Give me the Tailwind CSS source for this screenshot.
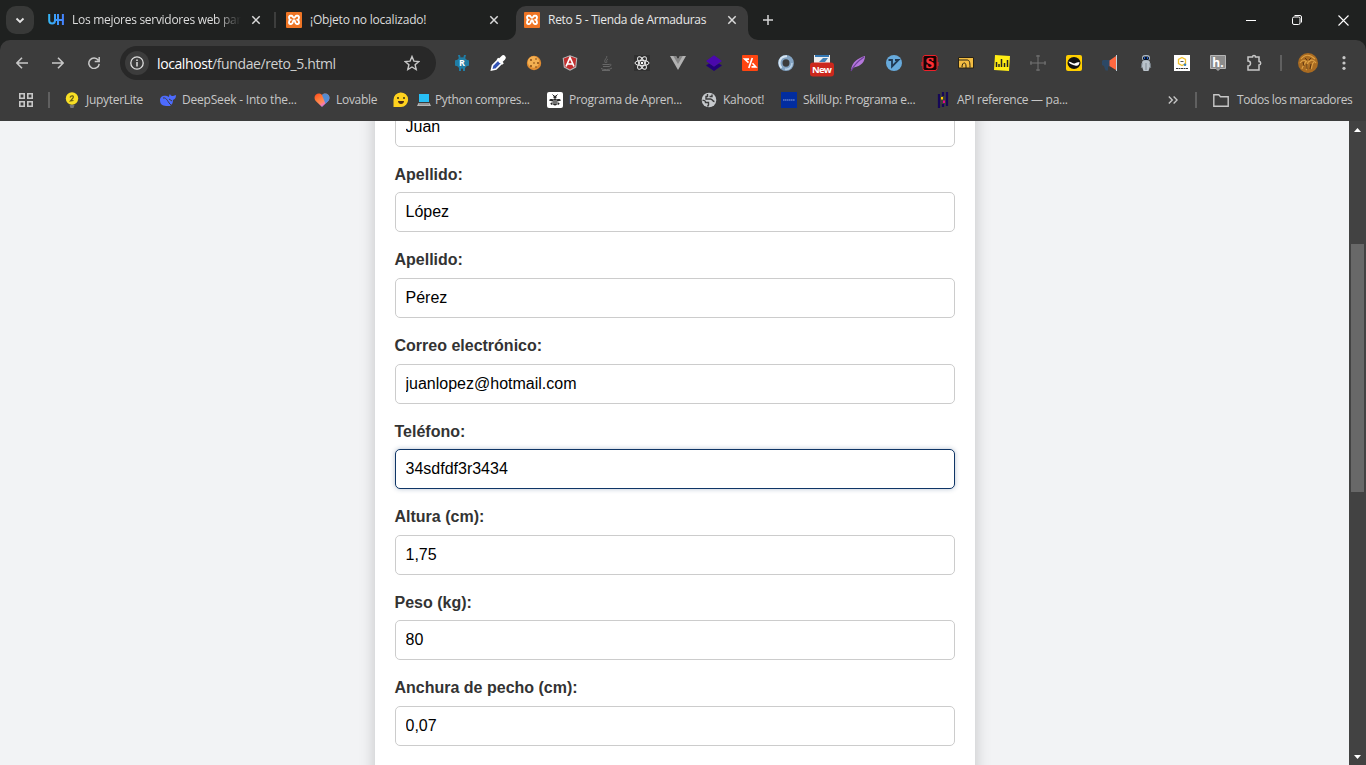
<!DOCTYPE html>
<html lang="es">
<head>
<meta charset="utf-8">
<title>Reto 5 - Tienda de Armaduras</title>
<script src="https://cdn.jsdelivr.net/npm/@tailwindcss/browser@4"></script>
</head>
<body class="w-[1366px] h-[765px] overflow-hidden flex flex-col bg-[#1f2120] font-['Open_Sans','Noto_Sans',sans-serif] text-[12px]">
<svg class="hidden">
  <symbol id="xampp" viewBox="0 0 16 16"><rect width="16" height="16" rx="1" fill="#ee7525"/><path d="M5.500 3.800H4.300C2.600 3.800 2.600 7 4.300 7.800 2.600 8.700 2.600 12 4.300 12H5.300C7.200 12 6.500 8.200 8 8.200S8.800 12 10.700 12h1c1.700 0 1.700-3.300 0-4.200 1.700-.8 1.700-4-.0-4h-1.200C9.300 3.800 9.300 5.800 8 5.800S6.700 3.800 5.500 3.800Z" fill="none" stroke="#fff" stroke-width="1.900"/></symbol>
  <symbol id="close" viewBox="0 0 10 10"><path d="M1.300 1.300 8.700 8.700M8.700 1.300 1.300 8.700" stroke="#dadada" stroke-width="1.500"/></symbol>
</svg>

<!-- Tab strip -->
<header class="h-10 shrink-0 flex items-center text-[#dcdcdc] relative">
  <button class="ml-[6px] size-7 rounded-[10px] bg-[#383938] flex items-center justify-center"><svg class="w-[10px] h-[7px]" viewBox="0 0 10 7"><path d="M1.500 1.500 5 5l3.500-3.500" fill="none" stroke="#e4e4e4" stroke-width="1.800"/></svg></button>
  <div class="ml-[14px] w-[226px] flex items-center">
    <svg class="size-4 shrink-0" viewBox="0 0 16 16"><defs><linearGradient id="uh"><stop stop-color="#36b5f5"/><stop offset="1" stop-color="#4484ff"/></linearGradient></defs><path d="M1.200 2v6.500a2.900 2.900 0 0 0 5.800 0V2M10 2v11M14.900 2v11M7 8h8" fill="none" stroke="url(#uh)" stroke-width="2"/></svg>
    <span class="ml-2 w-[169px] overflow-hidden whitespace-nowrap tracking-[-0.29px] [mask-image:linear-gradient(to_right,black_145px,transparent_169px)]">Los mejores servidores web para</span>
    <svg class="ml-[10px] size-[10px]"><use href="#close"/></svg>
  </div>
  <span class="w-[2px] h-4 bg-[#3d3e3d]"></span>
  <div class="ml-[10px] w-[230px] flex items-center">
    <svg class="size-4 shrink-0"><use href="#xampp"/></svg>
    <span class="ml-2 w-[179px] whitespace-nowrap tracking-[-0.2px]">¡Objeto no localizado!</span>
    <svg class="size-[10px]"><use href="#close"/></svg>
  </div>
  <div class="relative self-end h-[34px] w-[232px] bg-[#3c3c3c] rounded-t-[10px] flex items-center pb-[6px] pl-2 text-[#e8e8e8]">
    <svg class="absolute -left-[10px] bottom-0 size-[10px]" viewBox="0 0 10 10"><path d="M10 0v10H0A10 10 0 0 0 10 0" fill="#3c3c3c"/></svg>
    <svg class="absolute -right-[10px] bottom-0 size-[10px]" viewBox="0 0 10 10"><path d="M0 0v10h10A10 10 0 0 1 0 0" fill="#3c3c3c"/></svg>
    <svg class="size-4 shrink-0"><use href="#xampp"/></svg>
    <span class="ml-2 w-[179px] whitespace-nowrap tracking-[-0.28px]">Reto 5 - Tienda de Armaduras</span>
    <svg class="size-[10px]"><use href="#close"/></svg>
  </div>
  <svg class="ml-[15px] size-[10px]" viewBox="0 0 10 10"><path d="M5 0v10M0 5h10" stroke="#d5d5d5" stroke-width="1.500"/></svg>
  <div class="ml-auto mr-[17px] flex items-center gap-9 text-white">
    <svg class="size-[10px]" viewBox="0 0 10 10"><path d="M0 5.500h10" stroke="#fff"/></svg>
    <svg class="size-[10px]" viewBox="0 0 10 10"><rect x=".5" y="2" width="7.500" height="7.500" rx="1.500" fill="none" stroke="#fff"/><path d="M2.500 .5H8A1.500 1.500 0 0 1 9.500 2v5.500" fill="none" stroke="#fff"/></svg>
    <svg class="size-[11px]" viewBox="0 0 11 11"><path d="m.5.5 10 10m0-10-10 10" stroke="#fff" stroke-width="1.100"/></svg>
  </div>
</header>

<!-- Toolbar and bookmarks -->
<nav class="h-[81px] shrink-0 bg-[#3c3c3c] rounded-t-[10px]">
  <div class="h-[46px] flex items-center text-[#c7c7c7]">
    <svg class="ml-4 size-3" viewBox="0 0 12 12"><path d="M12 6H1M6 .8.900 6 6 11.200" fill="none" stroke="#c7c7c7" stroke-width="1.600"/></svg>
    <svg class="ml-6 size-3" viewBox="0 0 12 12"><path d="M0 6h11M6 .8 11.100 6 6 11.200" fill="none" stroke="#c7c7c7" stroke-width="1.600"/></svg>
    <svg class="ml-6 size-3" viewBox="0 0 12 12"><path d="M10.300 3.300A5.200 5.200 0 1 0 11.200 6.800M11.200 0v4.500H6.700" fill="none" stroke="#c7c7c7" stroke-width="1.500"/></svg>
    <div class="ml-5 w-[316px] h-[34px] rounded-full bg-[#282828] flex items-center pl-[5px] pr-4">
      <span class="size-6 rounded-full bg-[#3c3c3c] flex items-center justify-center"><svg class="size-[14px]" viewBox="0 0 14 14"><circle cx="7" cy="7" r="6.200" fill="none" stroke="#dedede" stroke-width="1.300"/><path d="M7 6v4.500M7 3.500V5" stroke="#dedede" stroke-width="1.500"/></svg></span>
      <span class="ml-2 text-[14px] tracking-[-0.4px] text-[#d0d0d0]"><span class="text-white">localhost</span>/fundae/reto_5.html</span>
      <svg class="ml-auto size-4" viewBox="0 0 16 16"><path d="m8 1.500 1.900 4.600 4.900.4-3.700 3.200 1.100 4.800L8 12l-4.200 2.500 1.100-4.800L1.200 6.500l4.900-.4Z" fill="none" stroke="#c7c7c7" stroke-width="1.400"/></svg>
    </div>
    <div class="ml-2 flex items-center [&>svg]:size-4 [&>svg]:mx-[10px] [&>svg]:shrink-0 [&>svg]:overflow-visible">
      <svg viewBox="0 0 16 16"><g fill="#207da5"><circle cx="8" cy="8" r="5.800"/><rect x="1" y="5" width="14" height="6" rx="1"/><path d="M4 0h2l1 4H5ZM12 0h-2L9 4h2ZM5 12h2v4H5ZM9 12h2v4H9Z"/></g><text x="8" y="11.300" text-anchor="middle" font-size="9" font-weight="700" fill="#fff">R</text></svg>
      <svg viewBox="0 0 16 16"><path d="m1.500 15 1-4.500 6-6L12 8l-6 6Z" fill="#3454b4" stroke="#fff" stroke-width="1.600"/><path d="m7.500 3.500 5.500 5.500" stroke="#fff" stroke-width="2.400"/><path d="m10.500 5.500 2.800-2.800" stroke="#fff" stroke-width="5" stroke-linecap="round"/></svg>
      <svg viewBox="0 0 16 16"><circle cx="8" cy="8" r="7.200" fill="#df8b31"/><circle cx="7.500" cy="7" r="5.700" fill="#f4b052"/><g fill="#79410f"><circle cx="5" cy="5" r=".9"/><circle cx="10" cy="4" r=".8"/><circle cx="8" cy="8" r=".8"/><circle cx="12" cy="8" r=".9"/><circle cx="5" cy="11" r=".9"/><circle cx="10" cy="12" r=".8"/></g></svg>
      <svg viewBox="0 0 16 16"><path d="m8 .3 7.300 2.600-1.100 9.500L8 15.700l-6.200-3.300L.7 2.900Z" fill="#b9babb"/><path d="m8 1.300 6.200 2.200-1 8.300L8 14.600l-5.200-2.800-1-8.300Z" fill="#c12d2d"/><path d="m4 11.500 4-9 4 9M5.500 9h5" fill="none" stroke="#fff" stroke-width="1.700"/></svg>
      <svg viewBox="0 0 16 16" fill="none" stroke="#686868" stroke-width="1"><path d="M8.500 1C10 3 5 4.500 7.500 8M10 4C7.500 5.500 9.500 6 8.500 8M4.500 9.500h6.500M5 11.500h6M11 9.500c3-1 2.500 1.500 0 2M3 13.500c2 1.500 9 1.500 11-.5M4 15.500h8"/></svg>
      <svg viewBox="0 0 16 16"><rect width="16" height="16" fill="#303030"/><g fill="none" stroke="#eee"><ellipse cx="8" cy="8" rx="7" ry="2.700"/><ellipse cx="8" cy="8" rx="7" ry="2.700" transform="rotate(60 8 8)"/><ellipse cx="8" cy="8" rx="7" ry="2.700" transform="rotate(120 8 8)"/></g><circle cx="8" cy="8" r="1.200" fill="#fff"/></svg>
      <svg viewBox="0 0 16 16"><path d="M0 1h6l2 3.500L10 1h6L8 15Z" fill="#b2b2b2"/><path d="M3.300 1H6l2 3.500L10 1h2.700L8 9Z" fill="#858585"/></svg>
      <svg viewBox="0 0 16 16"><path d="m0 10.500 3-2 5 3 5-3 3 2L8 16Z" fill="#230079"/><path d="m8 .3 8 5.700-8 5.800L0 6Z" fill="#4b08ad"/></svg>
      <svg viewBox="0 0 16 16"><rect width="16" height="16" rx="1" fill="#ff4510"/><path d="M7 4.200H2.800L6.500 7.700M10.300 3 6.800 13M9.500 11.800h4.200L10.500 8.300" fill="none" stroke="#fff" stroke-width="1.700"/></svg>
      <svg viewBox="0 0 16 16"><ellipse cx="8" cy="8" rx="5.700" ry="5.900" fill="none" stroke="#83a3c2" stroke-width="4.400"/><path d="M9 1.200C4 .8 1.500 4.300 1.500 8c0 2 .8 3.700 2 5" fill="none" stroke="#d5e5f2" stroke-width="2"/><path d="M7 14c4 1 7-2 7-6" fill="none" stroke="#b7cfe4" stroke-width="1.500"/></svg>
      <svg viewBox="0 0 16 16"><path d="M0 0h16v8H0Z" fill="#eee"/><path d="M1 0h14v2H1Z" fill="#3377b3"/><path d="M5 7 9 3h5L11 7Z" fill="#4380b4"/><rect x="-4" y="7.500" width="24" height="14" rx="3" fill="#cc281d"/><text x="8" y="18" text-anchor="middle" font-size="9.500" font-weight="700" fill="#fff" textLength="20">New</text></svg>
      <svg viewBox="0 0 16 16"><path d="M1 15C2 7 8 3 15 1c0 6-4 10-11 11.500Z" fill="#b477db"/><path d="M1 16C4 10 8 6 14 2" fill="none" stroke="#70409c" stroke-width="1.200"/></svg>
      <svg viewBox="0 0 16 16"><circle cx="8" cy="8" r="8" fill="#67aadc"/><path d="M2.500 5H6v6.500L12.500 5H9" fill="none" stroke="#203953" stroke-width="1.800"/></svg>
      <svg viewBox="0 0 16 16"><rect x="1" y=".5" width="14" height="15" rx="2" fill="#150405" stroke="#ed2029"/><text x="8" y="13" text-anchor="middle" font-size="15" font-weight="700" fill="#ff3038" stroke="#ff3038" stroke-width=".6" font-family="Liberation Serif">S</text><path d="M0 7v4M16 7v4" stroke="#ed2029"/></svg>
      <svg viewBox="0 0 16 16"><path d="M.5 2.500h15v10.500H.5Z" fill="#f3bd42" stroke="#292315"/><path d="M1 5h8c2.500 0 3 2 3 7.500M4 12c0-5 4-5.500 4-1v2" fill="none" stroke="#292315"/></svg>
      <svg viewBox="0 0 16 16"><path d="m1 0 15 1-1 15-15-1Z" fill="#ffed14"/><path d="M2.500 7v5M5 9v3M7.500 4v8M10.500 8v4M13.500 5v7" stroke="#242424" stroke-width="1.500"/></svg>
      <svg viewBox="0 0 16 16" fill="none" stroke="#747474"><path d="M8 0v6M8 10v6M0 8h6M10 8h6M6 1h4M6 15h4M1 6v4M15 6v4M7 7h2v2H7Z"/></svg>
      <svg viewBox="0 0 16 16"><rect width="16" height="16" rx="2" fill="#ffcf00"/><ellipse cx="8" cy="8" rx="6.500" ry="6" fill="#111"/><path d="M2.500 6.500C6 7 7 9 8.500 8.500S11.500 7 13.500 7c0 3-2 4.500-4.500 3.500S3.500 9.500 2.500 6.500Z" fill="#fff"/></svg>
      <svg viewBox="0 0 16 16"><path d="M1 5h7.500v6.500H6v4H3.500L2 11 0 10V6Z" fill="#2c4865"/><path d="M7.500 5.500 14 1v14l-6.500-4Z" fill="#ff6840"/><path d="M14.500 0v16" stroke="#c4d3dc"/></svg>
      <svg viewBox="0 0 16 16"><path d="M4.500 6h7l1 4-2 6h-5l-2-6Z" fill="#b9c2ca"/><path d="M4 8 3.300 13M12 8l.7 5" stroke="#778088"/><rect x="4" y="0" width="8" height="6" rx="3" fill="#aab5bf"/><rect x="5" y="1.500" width="6" height="3.500" rx="1.500" fill="#071326"/><path d="M6 3h1M9 3h1" stroke="#2b75ff" stroke-width="1.500"/><path d="M8 8v7" stroke="#808a93"/></svg>
      <svg viewBox="0 0 16 16"><path d="M0 0h16v16H0Z" fill="#fff"/><path d="m8 2.500 3.500 2v4L8 10.500 4.500 8.500v-4Z" fill="none" stroke="#f2c12e" stroke-width="1.300"/><path d="M6.500 6.500h3" stroke="#555"/><circle cx="11" cy="9.700" r="1.300" fill="#3380bd"/><path d="M2 13.500h12" stroke="#333" stroke-dasharray="2 .5"/></svg>
      <svg viewBox="0 0 16 16"><path d="M.5.500h15v13H10l-2 2-2-2H.5Z" fill="#8c8c8c" stroke="#b5b5b5"/><text x="8" y="11.700" text-anchor="middle" font-size="12" font-weight="700" fill="#fff">h.</text></svg>
      <svg viewBox="0 0 16 16"><path d="M2 2h4.500a1.500 1.500 0 0 1 3 0H13v4.500a1.700 1.700 0 0 1 0 3.400v5H2v-4a2.500 2.500 0 0 0 0-5Z" fill="none" stroke="#c7c7c7" stroke-width="1.500"/></svg>
    </div>
    <span class="ml-2 w-[2px] h-4 bg-[#606060]"></span>
    <svg class="ml-4 size-5" viewBox="0 0 20 20"><circle cx="10" cy="10" r="10" fill="#a96b21"/><path d="M3 6c4-5 9-5 14 0M2 10c3-4 5-3 7-1M11 9c2-3 5-2 7 1M4 16c0-3 3-4 4-8M8 17c3-3 0-6 3-9M13 16c2-3 0-5 3-7" fill="none" stroke="#dda044" stroke-width="1.200"/><path d="M5 9l1 4M9 11v5M13 11l-1 5M7 5l2 2M13 5l-2 2" stroke="#5d3410"/></svg>
    <svg class="ml-6 w-1 h-[14px]" viewBox="0 0 4 14" fill="#c7c7c7"><circle cx="2" cy="1.700" r="1.600"/><circle cx="2" cy="7" r="1.600"/><circle cx="2" cy="12.300" r="1.600"/></svg>
  </div>

  <div class="h-7 flex items-center text-[#c7c7c7] whitespace-nowrap text-[12px] tracking-[-0.3px] [&_svg]:shrink-0">
    <svg class="ml-[19px] size-[14px]" viewBox="0 0 14 14" fill="none" stroke="#c7c7c7" stroke-width="1.600"><path d="M.8.800h4.400v4.400H.8ZM8.800.800h4.400v4.400H8.800ZM.8 8.800h4.400v4.400H.8ZM8.800 8.800h4.400v4.400H8.800Z"/></svg>
    <span class="ml-[15px] w-[2px] h-4 bg-[#606060]"></span>
    <div class="ml-[14px] w-24 flex items-center gap-[6px]"><svg class="size-4" viewBox="0 0 16 16"><circle cx="8" cy="6.500" r="6.200" fill="#f8df25"/><path d="M5.500 13h5l-1 3h-3Z" fill="#777"/><path d="M6 5.500c1-2.500 4.500-2 3 .5L6.500 9l3-.5" fill="none" stroke="#665c16" stroke-width="1.200"/></svg><span>JupyterLite</span></div>
    <div class="w-[154px] flex items-center gap-[6px]"><svg class="size-4" viewBox="0 0 16 16"><path d="M0 8c0-4 4-5 7-4l2 1c0-2 1-3 1-3 .5 2 2 2 3 2l3-1c0 3-1 4-3 5 0 3-1 5-3 5l1 1c-5 0-11 1-11-6Z" fill="#4d6bfe"/><path d="M3 6c4-1 5 5 8 7M9 7l3 2" fill="none" stroke="#3c3c3c"/></svg><span class="tracking-[-0.2px]">DeepSeek - Into the...</span></div>
    <div class="w-[79px] flex items-center gap-[6px]"><svg class="size-4" viewBox="0 0 16 16"><defs><linearGradient id="heart" x1=".1" y1="0" x2=".8" y2="1"><stop stop-color="#ff4c20"/><stop offset=".35" stop-color="#ff7936"/><stop offset=".62" stop-color="#ff8c62"/><stop offset=".75" stop-color="#f776b0"/><stop offset="1" stop-color="#4b91f9"/></linearGradient></defs><path d="M8 15 1.500 8.700C-1.800 4 4-1 8 3c4-4 9.800 1 6.500 5.700Z" fill="url(#heart)"/><path d="M8 3c4-4 9.800 1 6.500 5.700L11.500 11.700Z" fill="#368ee9" opacity=".85"/></svg><span>Lovable</span></div>
    <div class="w-[154px] flex items-center"><svg class="size-4" viewBox="0 0 16 16"><path d="M.5 14.500V8a7.300 7.300 0 1 1 7.500 7H.5Z" fill="#ffd21e"/><path d="M5 5v2M11 5v2" stroke="#3b3515" stroke-width="1.500"/><path d="M5 9h6c0 4-6 4-6 0Z" fill="#4a2a16"/></svg><svg class="ml-2 size-[14px]" viewBox="0 0 14 14"><path d="M2 1h10v8H2Z" fill="#28bff5"/><path d="M1.500 10h11l1.500 3H0Z" fill="#b6b6b6"/><path d="M2 11h10" stroke="#777"/></svg><span class="ml-1 tracking-[-0.37px]">Python compres...</span></div>
    <div class="w-[154px] flex items-center gap-[6px]"><svg class="size-4" viewBox="0 0 16 16"><rect width="16" height="16" rx="2" fill="#fff"/><g fill="#282828"><ellipse cx="8" cy="10" rx="2.300" ry="3.500"/><circle cx="8" cy="5" r="1.600"/><path d="M2 8.500C3 6 6 7 7 8s-2.500 2-5 .5M14 8.500C13 6 10 7 9 8s2.500 2 5 .5M3.500 11l2-.8v2.500c-1.500.5-2-.7-2-1.700M12.500 11l-2-.8v2.500c1.500.5 2-.7 2-1.700"/></g><path d="M6 9h4M6 11h4" stroke="#fff" stroke-width=".7"/><path d="m5.500 2.500 1.500 1.500M10.500 2.500 9 4" stroke="#282828"/></svg><span>Programa de Apren...</span></div>
    <div class="w-20 flex items-center gap-[6px]"><svg class="size-4" viewBox="0 0 16 16"><circle cx="8" cy="8" r="7.300" fill="#c7cacd"/><path d="M1.500 8.500c2-.5 3 .5 3 2h3v2.500l-1 1.500M6.500 2v2.500H5V7h4.500c2 0 2 2.500 4 2.500M8.500 4.500H11V2.500" fill="none" stroke="#3c3c3c" stroke-width="1.400"/></svg><span>Kahoot!</span></div>
    <div class="w-[154px] flex items-center gap-[6px]"><svg class="size-4" viewBox="0 0 16 16"><path d="M0 0h16v16H0Z" fill="#022d9f"/><path d="M2 8h12" stroke="#8ca0d5" stroke-width="1" stroke-dasharray="1.500 .4"/></svg><span>SkillUp: Programa e...</span></div>
    <div class="flex items-center gap-[6px]"><svg class="size-4" viewBox="0 0 16 16"><path d="M4 2v14M8 0v4M8 12v3M12 0v14" stroke="#160858" stroke-width="2.200"/><path d="M7 5v2.500" stroke="#ffca00" stroke-width="2"/><path d="M9 8.500V11" stroke="#e70488" stroke-width="2"/></svg><span>API reference — pa...</span></div>
    <div class="ml-auto mr-[14px] flex items-center"><svg class="w-[10px] h-2" viewBox="0 0 10 8"><path d="m.8.500 3.500 3.500L.8 7.500M5.600.500 9.100 4 5.600 7.500" fill="none" stroke="#c7c7c7" stroke-width="1.400"/></svg><span class="ml-[17px] w-[2px] h-4 bg-[#606060]"></span><svg class="ml-4 w-4 h-[13px]" viewBox="0 0 16 13"><path d="M.8.800h5l1.700 1.900h7.700v9.500H.8Z" fill="none" stroke="#c7c7c7" stroke-width="1.400"/></svg><span class="ml-2 w-[115px] tracking-[-0.4px]">Todos los marcadores</span></div>
  </div>
</nav>

<!-- Page -->
<div class="flex-1 min-h-0 flex">
  <main class="w-[1349px] bg-[#f2f3f5] flex justify-center overflow-hidden font-['Liberation_Sans',Arial,sans-serif] text-[16px] text-black">
    <form class="w-[600px] h-[740px] -mt-[39.8px] px-5 bg-white shadow-[0_0_15px_rgba(0,0,0,0.2)] flex flex-col gap-[15px] shrink-0 leading-[25.6px] [&_label]:block [&_label]:font-bold [&_label]:text-[#333] [&_label]:mb-[5px] [&_input]:block [&_input]:w-full [&_input]:h-10 [&_input]:px-[10px] [&_input]:border [&_input]:border-[#ccc] [&_input]:rounded-[5px] [&_input]:bg-white">
      <div class="-mt-[5px]"><label>Nombre:</label><input value="Juan"></div>
      <div><label>Apellido:</label><input value="López"></div>
      <div><label>Apellido:</label><input value="Pérez"></div>
      <div><label>Correo electrónico:</label><input value="juanlopez@hotmail.com"></div>
      <div><label>Teléfono:</label><input class="border-[#0f3566]! shadow-[0_0_5px_rgba(15,53,102,0.3)]" value="34sdfdf3r3434"></div>
      <div><label>Altura (cm):</label><input value="1,75"></div>
      <div><label>Peso (kg):</label><input value="80"></div>
      <div><label>Anchura de pecho (cm):</label><input value="0,07"></div>
    </form>
  </main>
  <aside class="w-[17px] bg-[#424242] flex flex-col items-center">
    <svg class="mt-[7px] w-[7px] h-1" viewBox="0 0 7 4"><path d="M0 4 3.500 0 7 4Z" fill="#fff"/></svg>
    <div class="mt-[112px] w-[13px] h-[248px] bg-[#686868]"></div>
    <svg class="mt-auto mb-[6px] w-[7px] h-1" viewBox="0 0 7 4"><path d="M0 0h7L3.500 4Z" fill="#fff"/></svg>
  </aside>
</div>
</body>
</html>
